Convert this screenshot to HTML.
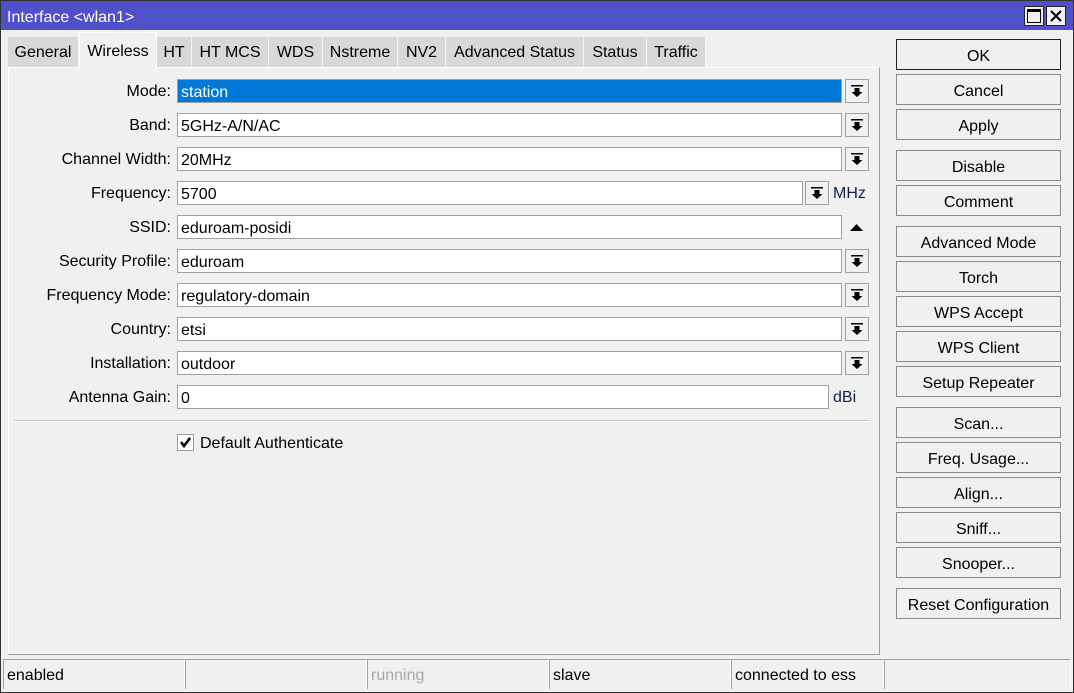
<!DOCTYPE html>
<html><head><style>
*{box-sizing:border-box;margin:0;padding:0}
body{width:1074px;height:693px;position:relative;background:#f0f0f0;font-family:"Liberation Sans",Arial,sans-serif;font-size:16px;color:#000;overflow:hidden}
.abs{position:absolute}
#win{left:0;top:0;width:1074px;height:693px;border:1px solid #333;}
#title{left:1px;top:1px;width:1072px;height:29px;background:#5050c8;color:#fff;font-size:16px;padding:8px 0 0 6px}
.tb{top:6px;width:20px;height:20px;background:#f0f0f0;border:1px solid #222}
.tab{top:37px;height:30px;background:#d8d8d8;border-right:1px solid #f4f4f4;text-align:center;padding-top:7px}
.tab.act{top:32px;height:36px;background:#f0f0f0;border:1px solid #fff;border-bottom:none;padding-top:10px;z-index:2}
#panel{left:8px;top:67px;width:872px;height:588px;border-left:1px solid #fff;border-top:1px solid #fff;border-right:1px solid #a0a0a0;border-bottom:1px solid #a0a0a0}
.lbl{width:171px;text-align:right;left:0}
.inp{left:177px;height:24px;background:#fff;border:1px solid #a0a0a0;padding:4px 0 0 3px}
.dd{left:845px;width:24px;height:24px;border:1px solid #a0a0a0;background:#f0f0f0}
.btn{left:896px;width:165px;height:31px;border:1px solid #8a8a8a;background:#f0f0f0;text-align:center;padding-top:8px}
.cell{top:659px;height:30px;border-left:1px solid #a0a0a0;border-top:1px solid #a0a0a0;border-right:1px solid #fff;padding:7px 0 0 3px}
</style></head><body>
<div id="win" class="abs"></div>
<div id="title" class="abs">Interface &lt;wlan1&gt;</div>
<div class="abs tb" style="left:1024px"><div class="abs" style="left:2px;top:2px;width:14px;height:14px;border:1px solid #000;border-top-width:3px"></div></div>
<div class="abs tb" style="left:1046px"><svg width="18" height="18"><path d="M4 4L14 14M14 4L4 14" stroke="#000" stroke-width="2"/></svg></div>

<div class="abs tab" style="left:8px;width:71px">General</div>
<div class="abs tab act" style="left:79px;width:78px">Wireless</div>
<div class="abs tab" style="left:157px;width:35px">HT</div>
<div class="abs tab" style="left:192px;width:77px">HT MCS</div>
<div class="abs tab" style="left:269px;width:54px">WDS</div>
<div class="abs tab" style="left:323px;width:75px">Nstreme</div>
<div class="abs tab" style="left:398px;width:48px">NV2</div>
<div class="abs tab" style="left:446px;width:138px">Advanced Status</div>
<div class="abs tab" style="left:584px;width:63px">Status</div>
<div class="abs tab" style="left:647px;width:59px">Traffic</div>

<div id="panel" class="abs"></div>

<svg width="0" height="0" style="position:absolute"><defs><symbol id="dn" viewBox="0 0 22 22"><rect x="5" y="5" width="12" height="1.5" fill="#000"/><path d="M8.5 8h5v4h3l-5.5 5-5.5-5h3z" fill="#000"/></symbol></defs></svg>

<div class="abs lbl" style="top:83px">Mode:</div>
<div class="abs inp" style="top:79px;width:665px;background:#0078d7;color:#fff">station</div>
<div class="abs dd" style="top:79px"><svg width="22" height="22"><use href="#dn"/></svg></div>

<div class="abs lbl" style="top:117px">Band:</div>
<div class="abs inp" style="top:113px;width:665px">5GHz-A/N/AC</div>
<div class="abs dd" style="top:113px"><svg width="22" height="22"><use href="#dn"/></svg></div>

<div class="abs lbl" style="top:151px">Channel Width:</div>
<div class="abs inp" style="top:147px;width:665px">20MHz</div>
<div class="abs dd" style="top:147px"><svg width="22" height="22"><use href="#dn"/></svg></div>

<div class="abs lbl" style="top:185px">Frequency:</div>
<div class="abs inp" style="top:181px;width:626px">5700</div>
<div class="abs dd" style="top:181px;left:805px"><svg width="22" height="22"><use href="#dn"/></svg></div>
<div class="abs" style="left:833px;top:185px;color:#10204a">MHz</div>

<div class="abs lbl" style="top:219px">SSID:</div>
<div class="abs inp" style="top:215px;width:665px">eduroam-posidi</div>
<svg class="abs" style="left:849px;top:222px" width="16" height="10"><path d="M1 9L7.5 2 14 9z" fill="#000"/></svg>

<div class="abs lbl" style="top:253px">Security Profile:</div>
<div class="abs inp" style="top:249px;width:665px">eduroam</div>
<div class="abs dd" style="top:249px"><svg width="22" height="22"><use href="#dn"/></svg></div>

<div class="abs lbl" style="top:287px">Frequency Mode:</div>
<div class="abs inp" style="top:283px;width:665px">regulatory-domain</div>
<div class="abs dd" style="top:283px"><svg width="22" height="22"><use href="#dn"/></svg></div>

<div class="abs lbl" style="top:321px">Country:</div>
<div class="abs inp" style="top:317px;width:665px">etsi</div>
<div class="abs dd" style="top:317px"><svg width="22" height="22"><use href="#dn"/></svg></div>

<div class="abs lbl" style="top:355px">Installation:</div>
<div class="abs inp" style="top:351px;width:665px">outdoor</div>
<div class="abs dd" style="top:351px"><svg width="22" height="22"><use href="#dn"/></svg></div>

<div class="abs lbl" style="top:389px">Antenna Gain:</div>
<div class="abs inp" style="top:385px;width:652px">0</div>
<div class="abs" style="left:833px;top:389px;color:#10204a">dBi</div>

<div class="abs" style="left:14px;top:420px;width:855px;height:2px;border-top:1px solid #c8c8c8;border-bottom:1px solid #fff"></div>

<div class="abs" style="left:177px;top:434px;width:17px;height:17px;background:#fff;border:1px solid #999"><svg width="15" height="15"><path d="M3 7l3 4 6-8" stroke="#000" stroke-width="2.6" fill="none"/></svg></div>
<div class="abs" style="left:200px;top:435px">Default Authenticate</div>

<div class="abs btn" style="top:39px;border:1px solid #222">OK</div>
<div class="abs btn" style="top:74px">Cancel</div>
<div class="abs btn" style="top:109px">Apply</div>
<div class="abs btn" style="top:150px">Disable</div>
<div class="abs btn" style="top:185px">Comment</div>
<div class="abs btn" style="top:226px">Advanced Mode</div>
<div class="abs btn" style="top:261px">Torch</div>
<div class="abs btn" style="top:296px">WPS Accept</div>
<div class="abs btn" style="top:331px">WPS Client</div>
<div class="abs btn" style="top:366px">Setup Repeater</div>
<div class="abs btn" style="top:407px">Scan...</div>
<div class="abs btn" style="top:442px">Freq. Usage...</div>
<div class="abs btn" style="top:477px">Align...</div>
<div class="abs btn" style="top:512px">Sniff...</div>
<div class="abs btn" style="top:547px">Snooper...</div>
<div class="abs btn" style="top:588px">Reset Configuration</div>

<div class="abs cell" style="left:3px;width:182px">enabled</div>
<div class="abs cell" style="left:185px;width:182px"></div>
<div class="abs cell" style="left:367px;width:182px;color:#a8a8a8">running</div>
<div class="abs cell" style="left:549px;width:182px">slave</div>
<div class="abs cell" style="left:731px;width:153px">connected to ess</div>
<div class="abs cell" style="left:884px;width:187px"></div>
</body></html>
